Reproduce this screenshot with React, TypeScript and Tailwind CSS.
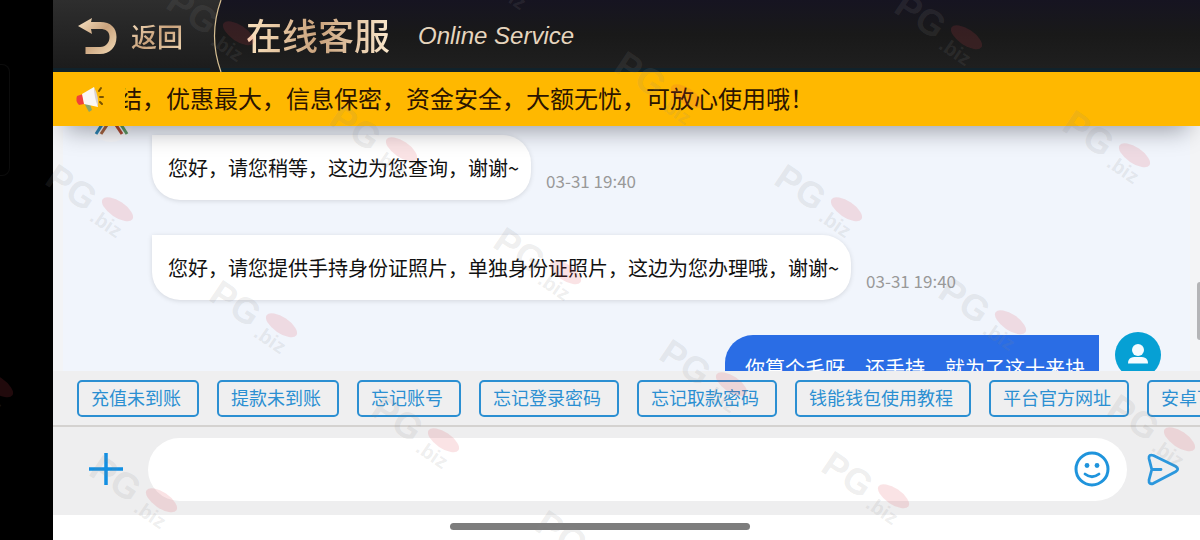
import React, { useState } from 'react';

const quickReplies = [
  '充值未到账',
  '提款未到账',
  '忘记账号',
  '忘记登录密码',
  '忘记取款密码',
  '钱能钱包使用教程',
  '平台官方网址',
  '安卓下载教程',
];

const agentMessages = [
  { id: 1, text: '您好，请您稍等，这边为您查询，谢谢~', time: '03-31 19:40' },
  { id: 2, text: '您好，请您提供手持身份证照片，单独身份证照片，这边为您办理哦，谢谢~', time: '03-31 19:40' },
];

// Each stamp is placed on a diagonal grid over the page
const stamps = [
  'left-[-84px] top-[344px]',
  'left-[36px] top-[168px]',
  'left-[80px] top-[459px]',
  'left-[157px] top-[-8px]',
  'left-[200px] top-[284px]',
  'left-[320px] top-[108px]',
  'left-[362px] top-[399px]',
  'left-[440px] top-[-60px]',
  'left-[484px] top-[231px]',
  'left-[526px] top-[514px]',
  'left-[605px] top-[55px]',
  'left-[650px] top-[343px]',
  'left-[765px] top-[168px]',
  'left-[812px] top-[455px]',
  'left-[885px] top-[-4px]',
  'left-[929px] top-[281px]',
  'left-[1053px] top-[114px]',
  'left-[1098px] top-[398px]',
];

const Watermark: React.FC = () => (
  <div aria-hidden="true" className="pointer-events-none absolute inset-0 z-30 overflow-hidden">
    {stamps.map(place => (
      <div key={place} className={`absolute h-[52px] w-[100px] ${place}`}>
        <div className="relative h-10 rotate-[34deg] font-['Liberation_Sans',sans-serif] text-[#888888]/15">
          <span className="absolute top-2.5 left-3 text-4xl leading-9 font-bold">PG</span>
          <span className="absolute top-7 left-[70px] text-xl leading-5 font-bold">.biz</span>
          <span className="absolute top-3 left-[70px] h-4 w-9 rounded-[50%] bg-[#e04050]/15"></span>
        </div>
      </div>
    ))}
  </div>
);

const BackIcon: React.FC = () => (
  <svg width="42" height="38" viewBox="0 0 42 38" aria-hidden="true">
    <defs>
      <linearGradient id="backGold" x1="0" y1="0" x2="1" y2="1">
        <stop offset="0" stopColor="#fbe6c6" />
        <stop offset="0.5" stopColor="#c9a27c" />
        <stop offset="1" stopColor="#f3dcb8" />
      </linearGradient>
    </defs>
    <path
      d="M1 9 L15 1 L14 5 H23 C34 5 39.500 11 39.500 20 C39.500 30 33 37 23 37 H8.500 V30 H23 C29 30 32.500 25.500 32.500 20 C32.500 14.500 29 12 23 12 H14 L15 17 Z"
      fill="url(#backGold)"
    />
  </svg>
);

const MegaphoneIcon: React.FC = () => (
  <svg width="32" height="28" viewBox="0 0 32 28" aria-hidden="true" className="shrink-0">
    <path d="M9 18 L14 27 L17 25 L14 16 Z" fill="#8aa66a" />
    <path d="M2 11 L8 9 L9 19 L4 20 Q0 16 2 11 Z" fill="#f0403a" />
    <path d="M7 9 L19 2 L23 22 L9 19 Z" fill="#fbf7f4" />
    <path d="M19 2 Q24 11 23 22 Q19 12 19 2 Z" fill="#d9d2cf" />
    <path d="M24 6 L26 3 M25 12 H28 M25 17 L27 19" stroke="#7a5200" strokeWidth="2" strokeLinecap="round" />
  </svg>
);

const AgentAvatar: React.FC = () => (
  <svg width="46" height="46" viewBox="0 0 46 46" aria-hidden="true" className="shrink-0">
    <circle cx="23" cy="23" r="23" fill="#f7f7f9" />
    <path d="M15 27 L8 38" stroke="#2f87b5" strokeWidth="3" />
    <path d="M21 26 L13 38" stroke="#a8653f" strokeWidth="3" />
    <path d="M26 26 L34 38" stroke="#b04a30" strokeWidth="3" />
    <path d="M32 27 L39 38" stroke="#5d9a63" strokeWidth="3" />
  </svg>
);

const UserAvatar: React.FC = () => (
  <svg width="46" height="46" viewBox="0 0 46 46" aria-hidden="true" className="shrink-0">
    <circle cx="23" cy="23" r="23" fill="#06a0d4" />
    <circle cx="23" cy="18" r="6" fill="#f4fbff" />
    <path d="M13 31.500 C13 25 18 25 23 25 C28 25 33 25 33 31.500 Z" fill="#f4fbff" />
  </svg>
);

const App: React.FC = () => {
  const [draft, setDraft] = useState('');

  return (
    <div className="relative flex h-screen overflow-hidden bg-black font-['Noto_Sans_CJK_SC',sans-serif]">
      <aside className="w-[53px] shrink-0 pt-16">
        <div className="h-28 w-2.5 rounded-r-lg border border-l-0 border-[#0c0c0c]"></div>
      </aside>

      <div className="flex min-w-0 flex-1 flex-col bg-white">
        <header className="flex h-[72px] shrink-0 items-stretch border-b-4 border-[#10222b] bg-linear-to-b from-[#161421] via-[#191919] to-[#1f1f1f]">
          <button type="button" className="flex w-[157px] items-center gap-3 bg-linear-to-b from-[#2e2e2e] to-[#1c1c1c] pt-1 pl-6">
            <BackIcon />
            <span className="bg-linear-to-br from-[#fbe6c6] via-[#c9a27c] to-[#f3dcb8] bg-clip-text text-[26px] leading-9 font-medium whitespace-nowrap text-transparent">
              返回
            </span>
          </button>
          <svg width="12" height="72" viewBox="0 0 12 72" aria-hidden="true" className="shrink-0">
            <defs>
              <linearGradient id="panelEdge" x1="0" y1="0" x2="0" y2="1">
                <stop offset="0" stopColor="#2e2e2e" />
                <stop offset="1" stopColor="#1c1c1c" />
              </linearGradient>
            </defs>
            <path d="M0 0 H11 Q-2 36 11 72 H0 Z" fill="url(#panelEdge)" />
            <path d="M11 0 Q-2 36 11 72" fill="none" stroke="#d8c093" strokeWidth="1.2" />
          </svg>
          <div className="flex items-center gap-7 pt-1 pl-6">
            <h1 className="bg-linear-to-r from-[#fbe3bf] via-[#c9a27c] to-[#fbe8cc] bg-clip-text pb-1 text-4xl leading-[52px] font-medium whitespace-nowrap text-transparent">
              在线客服
            </h1>
            <span className="font-['Liberation_Sans',sans-serif] text-2xl leading-8 whitespace-nowrap text-[#e6d5be] italic">
              Online Service
            </span>
          </div>
        </header>

        <div className="relative z-10 flex h-[54px] shrink-0 items-center bg-[#ffb800] pl-[22px] shadow-[0_16px_24px_-12px_#00001060]">
          <MegaphoneIcon />
          <div className="ml-[18px] flex-1 overflow-hidden pb-0.5">
            <p className="-ml-[7px] text-2xl leading-9 whitespace-nowrap text-[#2b1400]">
              结，优惠最大，信息保密，资金安全，大额无忧，可放心使用哦！
            </p>
          </div>
        </div>

        <main className="relative min-h-0 flex-1 overflow-hidden border-x-[10px] border-[#f3f4f6] bg-[#f1f5fc]">
          <div className="-mt-[30px] flex gap-[18px] pl-[25px]">
            <AgentAvatar />
            <div className="flex flex-col gap-[35px] pt-[39px]">
              {agentMessages.map(msg => (
                <div key={msg.id} className="flex items-end gap-[15px]">
                  <p className="rounded-[28px] rounded-tl-none bg-white py-[18px] pr-3 pl-4 text-xl leading-[29px] whitespace-nowrap text-[#111111] shadow-[0_1px_5px_#00000020]">
                    {msg.text}
                  </p>
                  <time className="pb-[7px] text-[17px] leading-6 whitespace-nowrap text-[#999999]">{msg.time}</time>
                </div>
              ))}
            </div>
          </div>
          <div className="mt-8 flex justify-end gap-4 pr-[29px]">
            <p className="mt-[3px] rounded-[28px] rounded-tr-none bg-[#2a6de5] py-[18px] pr-3.5 pl-5 text-xl leading-[29px] whitespace-nowrap text-white">
              你算个毛呀，还手持，就为了这十来块
            </p>
            <UserAvatar />
          </div>
        </main>

        <nav className="flex h-[56px] shrink-0 items-center gap-[18px] overflow-hidden border-b-2 border-[#d4d2d0] bg-[#efeff0] pl-6">
          {quickReplies.map(label => (
            <button
              key={label}
              type="button"
              onClick={() => setDraft(label)}
              className="h-[37px] shrink-0 rounded-[5px] border-2 border-[#2b8fd2] pr-4 pb-0.5 pl-3 text-lg leading-6 whitespace-nowrap text-[#2b8fd2] hover:bg-white"
            >
              {label}
            </button>
          ))}
        </nav>

        <form onSubmit={e => e.preventDefault()} className="flex h-[88px] shrink-0 items-center bg-[#eeeeef] pr-5 pb-1 pl-9">
          <button type="button" aria-label="添加附件" className="shrink-0">
            <svg width="34" height="34" viewBox="0 0 34 34" aria-hidden="true">
              <path d="M0 17 H34 M17 1 V33" stroke="#128fe2" strokeWidth="3.500" />
            </svg>
          </button>
          <div className="ml-[25px] flex h-[63px] flex-1 items-center rounded-full bg-white pr-[17px] pl-8">
            <input
              type="text"
              aria-label="输入消息"
              value={draft}
              onChange={e => setDraft(e.target.value)}
              className="h-10 min-w-0 flex-1 bg-transparent text-xl text-[#111111] outline-none"
            />
            <button type="button" aria-label="表情" className="shrink-0">
              <svg width="36" height="36" viewBox="0 0 36 36" fill="none" aria-hidden="true">
                <circle cx="18" cy="18" r="16" stroke="#1f94dc" strokeWidth="3" />
                <circle cx="13" cy="14.500" r="2.400" fill="#1f94dc" />
                <circle cx="23" cy="14.500" r="2.400" fill="#1f94dc" />
                <path d="M11 23 Q18 28.500 25 23" stroke="#1f94dc" strokeWidth="2.800" strokeLinecap="round" />
              </svg>
            </button>
          </div>
          <button type="submit" aria-label="发送" className="ml-5 shrink-0">
            <svg width="33" height="33" viewBox="0 0 33 33" fill="none" aria-hidden="true">
              <path
                d="M6.500 2.500 L28.500 13.200 Q33 16 28.500 18.800 L6.500 30.300 Q1.500 32 2 27 L4.800 16.500 L2 5.500 Q1.500 0.800 6.500 2.500 Z M5 16.500 H14"
                stroke="#2b97dd"
                strokeWidth="2.800"
                strokeLinejoin="round"
                strokeLinecap="round"
              />
            </svg>
          </button>
        </form>

        <footer className="flex h-[25px] shrink-0 justify-center bg-white pt-2 pr-[53px]">
          <div className="h-[7px] w-[300px] rounded-full bg-[#7d7d7d]"></div>
        </footer>
      </div>

      {/* scrollbar thumb of the chat */}
      <div className="absolute top-[282px] right-0 z-20 h-[58px] w-[3px] rounded-l-full bg-[#b4b4b6]"></div>
      <Watermark />
    </div>
  );
};

export default App;
